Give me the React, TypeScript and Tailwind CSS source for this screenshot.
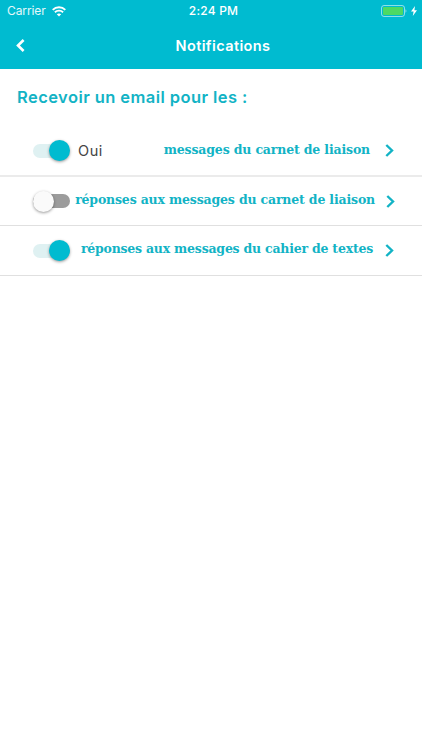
import { cx } from "class-variance-authority";

interface SwitchProps {
  checked: boolean;
}

interface NotificationRow {
  id: string;
  label: string;
  checked: boolean;
  status?: string;
  rowClass: string;
  labelClass: string;
  chevronClass: string;
}

const rows: NotificationRow[] = [
  {
    id: "carnet",
    label: "messages du carnet de liaison",
    checked: true,
    status: "Oui",
    rowClass: "h-[51px] border-b-2 border-[#ebebeb]",
    labelClass: "mr-[15px] mb-px tracking-[-0.16px]",
    chevronClass: "mr-[28px]",
  },
  {
    id: "reponses-carnet",
    label: "réponses aux messages du carnet de liaison",
    checked: false,
    rowClass: "h-[49px] border-b border-[#e0e0e0]",
    labelClass: "mr-[11px] mb-[2px] tracking-[-0.17px]",
    chevronClass: "mr-[27px]",
  },
  {
    id: "reponses-cahier",
    label: "réponses aux messages du cahier de textes",
    checked: true,
    rowClass: "h-[50px] border-b border-[#e0e0e0]",
    labelClass: "mr-[12px] mb-[2px] tracking-[-0.22px]",
    chevronClass: "mr-[28px]",
  },
];

function StatusBar() {
  return (
    <div className="flex h-[22px] items-center pl-[7px] pr-[5px] text-xs leading-none text-white">
      <div className="flex flex-1 items-center gap-[6px]">
        <span className="tracking-[-0.1px] text-white/90">Carrier</span>
        <svg width="14" height="11" viewBox="0 0 14 11" fill="none" stroke="white" strokeWidth="1.9">
          <path d="M0.7 3.9C4.2 0.4 9.8 0.4 13.3 3.9" />
          <path d="M2.9 6.3C5.2 4.1 8.8 4.1 11.1 6.3" />
          <path d="M7 10.6L4.8 8.3C6.1 7.2 7.9 7.2 9.2 8.3Z" fill="white" stroke="none" />
        </svg>
      </div>
      <span className="ml-[3px] font-medium tracking-[0.2px]">2:24 PM</span>
      <div className="flex flex-1 items-center justify-end gap-[4px]">
        <svg width="27" height="12" viewBox="0 0 27 12" fill="none">
          <rect x="1.5" y="0.5" width="23" height="11" rx="2.5" stroke="white" strokeOpacity="0.55" />
          <rect x="3" y="2" width="20" height="8" rx="1" fill="#4cd964" />
          <path d="M25.5 4.3C26.7 4.8 26.7 7.2 25.5 7.7Z" fill="white" fillOpacity="0.6" />
        </svg>
        <svg width="6" height="10" viewBox="0 0 6 10" fill="white">
          <path d="M4 0L0 5.6H2.6L1.8 10L6 4.2H3.4Z" />
        </svg>
      </div>
    </div>
  );
}

function Header() {
  return (
    <header className="h-[69px] bg-[#00bbd0]">
      <StatusBar />
      <div className="flex h-[47px] items-center px-4">
        <button className="w-6" aria-label="Retour">
          <svg width="9" height="13" viewBox="0 0 9 13" fill="none" stroke="white" strokeWidth="2.6">
            <path d="M7.6 1L2 6.5L7.6 12" />
          </svg>
        </button>
        <h1 className="flex-1 text-center text-[14.5px] font-semibold tracking-[0.4px] text-white">Notifications</h1>
      </div>
    </header>
  );
}

function Switch({ checked }: SwitchProps) {
  return (
    <button
      role="switch"
      aria-checked={checked}
      className={cx(
        "flex h-[14px] w-[37px] shrink-0 items-center rounded-full",
        checked ? "justify-end bg-[#dff1f2]" : "justify-start bg-[#9c9c9c]"
      )}
    >
      <span
        className={cx(
          "h-[21px] w-[21px] rounded-full shadow-[0_1px_3px_rgba(0,0,0,0.4)]",
          checked ? "bg-[#00bbd0]" : "bg-[#fafafa]"
        )}
      />
    </button>
  );
}

export default function App() {
  return (
    <main className="h-[750px] w-full bg-white font-['Inter',sans-serif]">
      <Header />
      <h2 className="flex h-[57px] items-center pl-[17px] text-[16.5px] font-semibold tracking-[0.43px] text-[#12b3c5]">
        Recevoir un email pour les :
      </h2>
      {rows.map(row => (
        <div key={row.id} className={cx("flex items-center whitespace-nowrap pl-[33px]", row.rowClass)}>
          <Switch checked={row.checked} />
          {row.status && <span className="ml-2 text-[14.5px] tracking-[0.6px] text-[#444]">{row.status}</span>}
          <span className={cx("ml-auto font-['DejaVu_Serif',serif] text-[12.5px] font-bold text-[#12b3c5]", row.labelClass)}>
            {row.label}
          </span>
          <svg className={cx("shrink-0", row.chevronClass)} width="9" height="13" viewBox="0 0 9 13" fill="none" stroke="#12b3c5" strokeWidth="2.4">
            <path d="M1.3 1L7 6.5L1.3 12" />
          </svg>
        </div>
      ))}
    </main>
  );
}
